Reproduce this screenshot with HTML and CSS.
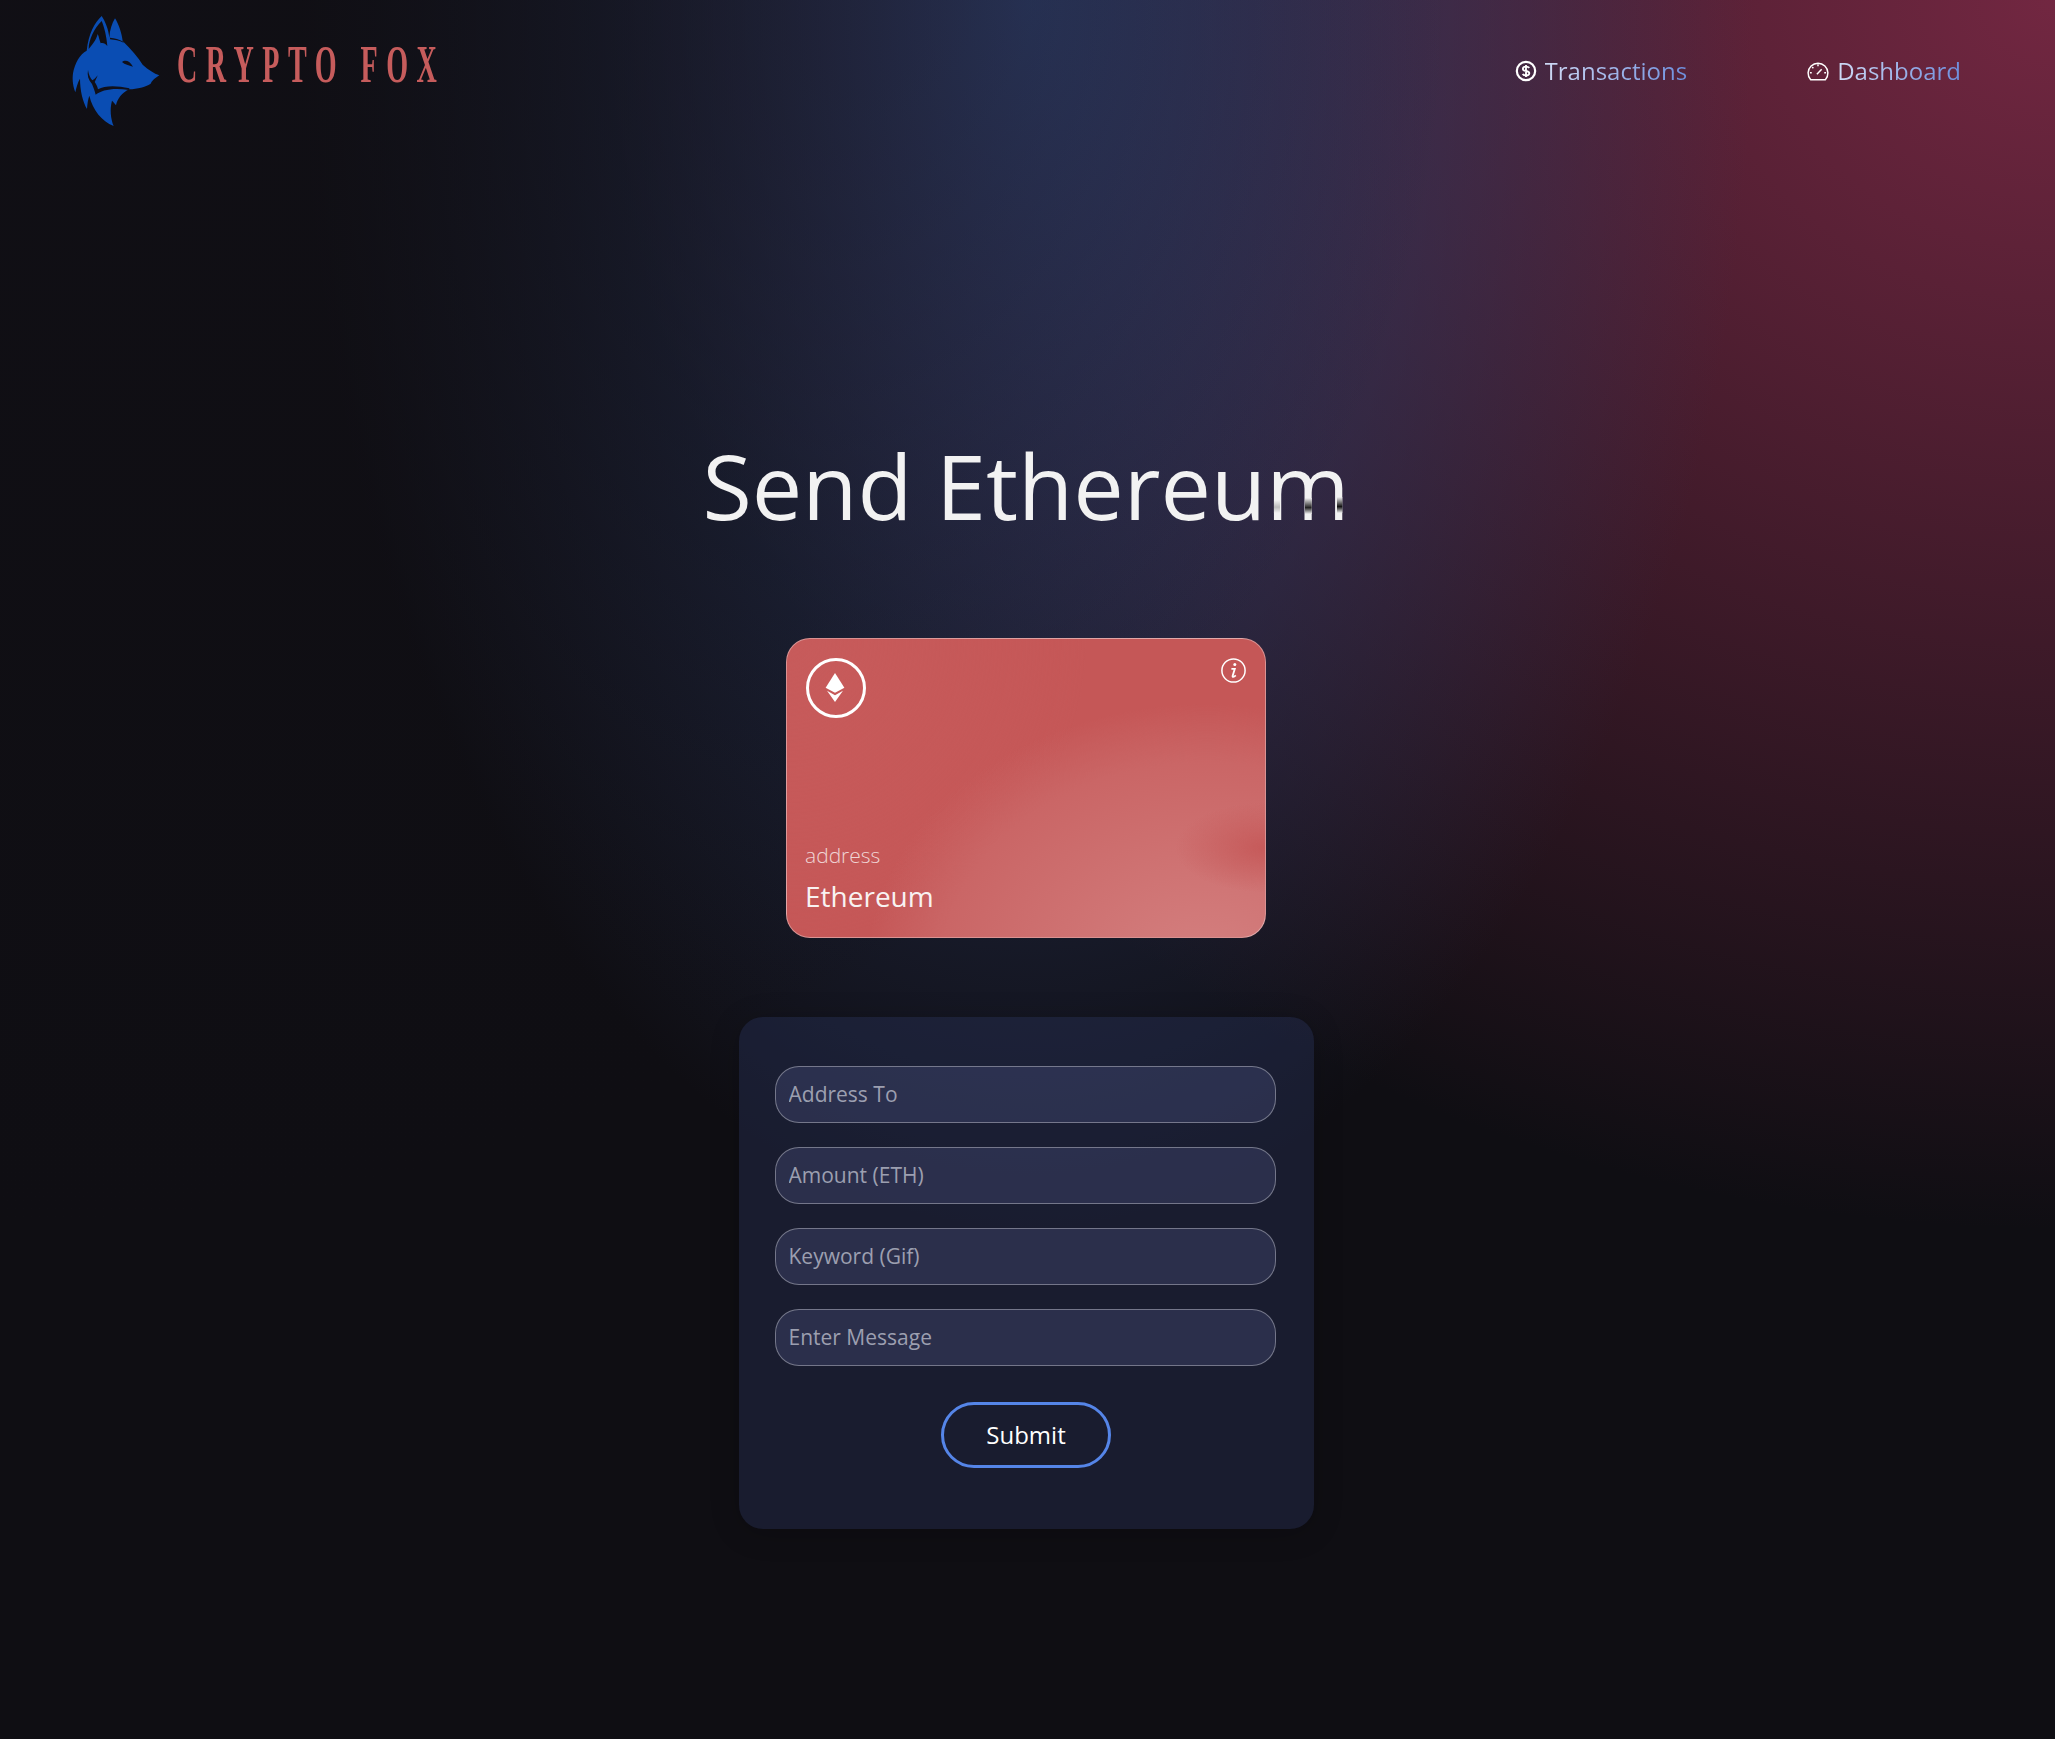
FILE: index.html
```html
<!DOCTYPE html>
<html lang="en">
<head>
<meta charset="utf-8">
<title>Crypto Fox</title>
<link rel="stylesheet" href="styles.css">
</head>
<body>
<header class="nav">
  <a class="brand" href="#">
    <svg class="fox" viewBox="0 0 330 375" aria-hidden="true">
      <path class="fox-fill" fill-rule="evenodd" d="M125 18C104 38 86 70 80 122C60 132 44 160 39 190C36 212 40 232 46 247C49 232 53 218 60 206C60 240 68 275 81 297C82 282 84 268 88 257C98 300 125 333 161 348C152 325 149 298 156 272C160 276 165 282 168 286C172 266 186 248 208 238C232 236 256 232 272 221C276 214 279 208 298 196C282 190 266 180 248 164C234 142 214 118 188 93C186 72 176 42 165 25C156 40 149 60 148 83C146 60 136 34 125 18ZM125 33C133 52 140 80 142 108C136 100 128 97 122 100C118 90 117 80 113 72C110 84 104 96 86 117C86 90 102 56 125 33Z"/>
      <path class="fox-mark" d="M150 83C164 84 178 88 190 95L191 98C178 92 164 89 150 88Z"/>
      <path class="fox-mark" d="M186 156C194 149 208 150 219 170C206 166 195 164 186 156Z"/>
      <path class="fox-mark" d="M84 180C81 196 85 210 96 222C100 232 104 242 107 254C124 240 160 232 207 240C208 238 208 236 208 235C170 226 134 226 114 238C112 228 108 222 104 216C107 210 110 204 113 196C107 204 102 209 97 211C91 204 86 194 84 180Z"/>
    </svg>
    <span class="brand-text">CRYPTO FOX</span>
  </a>
  <nav class="links">
    <a class="link" href="#">
      <svg class="ico" viewBox="0 0 24 24" aria-hidden="true"><circle cx="12" cy="12" r="10" fill="none" stroke="#fff" stroke-width="2.4"/><path d="M15.6 8.6C14.8 7.6 13.4 7.2 12 7.2C10 7.2 8.6 8.2 8.6 9.7C8.6 13 15.6 11 15.6 14.4C15.6 15.9 14 16.8 12 16.8C10.4 16.8 9 16.2 8.3 15.2M12 5.4V18.6" fill="none" stroke="#fff" stroke-width="2"/></svg>
      <span class="link-text">Transactions</span>
    </a>
    <a class="link" href="#">
      <svg class="ico" viewBox="0 0 24 24" aria-hidden="true"><path d="M4 21.5A10.8 10.8 0 1 1 20 21.5Z" fill="none" stroke="#fff" stroke-width="1.6" stroke-linejoin="round"/><path d="M10.8 15.6L16 10M12 4.6V6.8M5.6 7.6L7 9M3.2 14H5.2M18.8 14H20.8" fill="none" stroke="#fff" stroke-width="1.6"/></svg>
      <span class="link-text">Dashboard</span>
    </a>
  </nav>
</header>
<main class="main">
  <h1 class="title">Send Ethereum</h1>
  <section class="eth-card">
    <div class="card-top">
      <span class="eth-badge">
        <svg class="eth" viewBox="0 0 20 32" aria-hidden="true"><path d="M10 0L20 15.6L10 21L0 15.6Z" fill="#fff"/><path d="M1.5 19L10 23.6L18.5 19L10 31Z" fill="#fff"/></svg>
      </span>
      <svg class="info" viewBox="0 0 25 25" aria-hidden="true"><circle cx="12.5" cy="12.5" r="11.6" fill="none" stroke="#fff" stroke-width="1.5"/><circle cx="13.8" cy="6.4" r="1.5" fill="#fff"/><path d="M10.4 10.8H13.8L11.6 18C11.3 19.2 12.6 19.4 14.8 17.4" fill="none" stroke="#fff" stroke-width="1.8"/></svg>
    </div>
    <div class="card-bottom">
      <p class="card-address">address</p>
      <p class="card-name">Ethereum</p>
    </div>
  </section>
  <form class="panel">
    <input class="field" type="text" placeholder="Address To">
    <input class="field" type="number" placeholder="Amount (ETH)">
    <input class="field" type="text" placeholder="Keyword (Gif)">
    <input class="field" type="text" placeholder="Enter Message">
    <button class="submit" type="button">Submit</button>
  </form>
</main>
</body>
</html>
```
FILE: styles.css
```css
* { box-sizing: border-box; }
html, body { margin: 0; }
body {
  min-height: 1739px;
  font-family: "Open Sans", "Noto Sans", sans-serif;
  color: #fff;
  background-color: #0f0e13;
  background-image:
    radial-gradient(at 0% 0%, hsla(253,16%,7%,1) 0, transparent 50%),
    radial-gradient(at 50% 0%, hsla(225,39%,30%,1) 0, transparent 50%),
    radial-gradient(at 100% 0%, hsla(339,49%,30%,1) 0, transparent 50%);
}
a { color: inherit; text-decoration: none; }
.nav {
  display: flex;
  align-items: flex-start;
  justify-content: space-between;
  padding: 10px 94px 0 60px;
  height: 135px;
}
.brand { display: flex; align-items: flex-start; width: 400px; }
.fox { width: 110px; height: 125px; flex: none; }
.fox-fill { fill: #0a4db3; }
.fox-mark { fill: #10101a; }
.brand-text {
  flex: none;
  margin: 24px 0 0 7px;
  font-family: "Liberation Serif", serif;
  font-size: 53px;
  font-weight: 700;
  line-height: 60px;
  letter-spacing: 16px;
  white-space: nowrap;
  color: #c65c5c;
  transform: scaleX(0.53);
  transform-origin: left center;
}
.links { display: flex; gap: 120px; margin-top: 43px; }
.link { display: flex; align-items: center; gap: 8px; height: 36px; }
.ico { width: 22px; height: 22px; flex: none; }
.link-text {
  font-size: 24px;
  line-height: 36px;
  background: linear-gradient(90deg, #cfdaf5, #6d8edd);
  -webkit-background-clip: text;
  background-clip: text;
  color: transparent;
}
.main { display: flex; flex-direction: column; align-items: center; padding-right: 3px; }
.title {
  margin: 289px 0 0;
  font-size: 90px;
  line-height: 122px;
  font-weight: 400;
  background:
    linear-gradient(#f2f2f2, #bbb 55%, #f2f2f2) right 70px top 76px / 8px 13px no-repeat,
    linear-gradient(#f2f2f2, #222 60%, #f2f2f2) right 37px top 74px / 8px 16px no-repeat,
    linear-gradient(#f2f2f2, #111 60%, #f2f2f2) right 5px top 73px / 8px 16px no-repeat,
    #f2f2f2;
  -webkit-background-clip: text;
  background-clip: text;
  color: transparent;
}
.eth-card {
  display: flex;
  flex-direction: column;
  justify-content: space-between;
  width: 480px;
  height: 300px;
  margin-top: 92px;
  padding: 19px 19px 20px 18px;
  border: 1px solid rgba(255,255,255,0.35);
  border-radius: 24px;
  background-color: #c55757;
  background-image:
    radial-gradient(ellipse 90px 45px at 100% 70%, #c65a5a 0, rgba(198,90,90,0) 100%),
    radial-gradient(ellipse 340px 265px at 420px 330px, #d48080 0, #cc6c6c 60%, #ca6666 78%, rgba(197,87,87,0) 100%),
    radial-gradient(ellipse 300px 300px at 0 0, #c75b5b 0, rgba(199,91,91,0) 100%);
}
.card-top { display: flex; justify-content: space-between; align-items: flex-start; }
.eth-badge {
  display: flex;
  align-items: center;
  justify-content: center;
  width: 60px;
  height: 60px;
  margin-left: 1px;
  border: 3px solid #fff;
  border-radius: 50%;
}
.eth { width: 20px; height: 30px; margin-left: -2px; }
.info { width: 25px; height: 25px; }
.card-bottom { display: flex; flex-direction: column; }
.card-address { margin: 0; font-size: 21px; line-height: 28px; font-weight: 300; color: rgba(255,255,255,0.75); }
.card-name { margin: 7px 0 0; font-size: 28px; line-height: 41px; font-weight: 500; color: #f8f2f2; }
.panel {
  display: flex;
  flex-direction: column;
  align-items: center;
  gap: 24px;
  width: 575px;
  height: 512px;
  margin-top: 79px;
  padding: 49px 38px 0 36px;
  border-radius: 24px;
  background: rgba(39,51,89,0.4);
  box-shadow: 0 4px 30px rgba(0,0,0,0.2);
}
.field {
  width: 501px;
  height: 57px;
  padding: 0 12px 2px 13px;
  border: 1px solid rgba(255,255,255,0.35);
  border-radius: 24px;
  background: rgba(78,82,130,0.35);
  font: 400 21px "Open Sans", sans-serif;
  color: #fff;
  outline: none;
}
.field::placeholder { color: #9c9fb0; opacity: 1; }
.submit {
  width: 170px;
  height: 66px;
  margin: 12px 0 0 2px;
  padding: 0 0 1px;
  border: 3px solid #5585e8;
  border-radius: 33px;
  background: transparent;
  font: 500 24px "Open Sans", sans-serif;
  color: #fff;
}
```
